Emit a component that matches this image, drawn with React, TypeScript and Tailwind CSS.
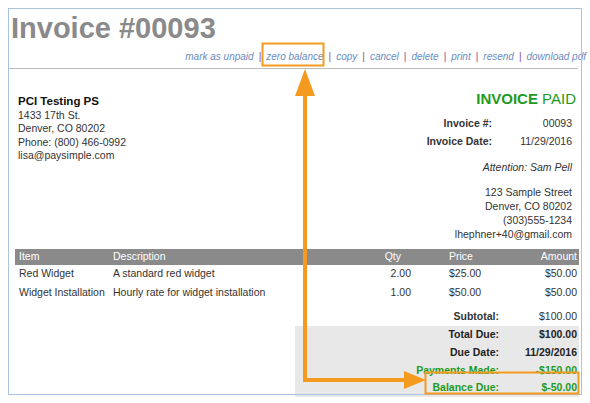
export default function App() {
  const links = ["mark as unpaid", "zero balance", "copy", "cancel", "delete", "print", "resend", "download pdf"];
  return (
    <div className="relative w-[590px] h-[403px] bg-white overflow-hidden" style={{ fontFamily: '"Liberation Sans", Arial, sans-serif' }}>
      <div className="absolute left-[8px] top-[8px] w-[574px] h-[387px] border border-[#a9c3de]" />
      <div className="pl-[10px] pt-[12px] w-[580px]">
        <div className="text-[29px] font-bold text-[#8a8a8a] leading-[32px] ml-[1px]">Invoice #00093</div>
        <div className="flex justify-end items-center text-[10px] italic text-[#6a8cbf] mt-[5px] whitespace-nowrap -mr-[6px] h-[14px]">
          {links.map((l, i) => (
            <span key={l} className="flex items-center">
              {i > 0 && <span className="mx-[5px] not-italic text-[#8a4b8f]">|</span>}
              <span>{l}</span>
            </span>
          ))}
        </div>
        <div className="h-[1px] bg-[#bbbbbb] mt-[5px] -ml-[2px] w-[570px]" />
        <div className="flex justify-between mt-[21px] pr-[4px]">
          <div className="text-[10.5px] text-[#333] leading-[13.5px] pl-[8px] pt-[5px]">
            <div className="font-bold text-[11.5px] text-[#111]">PCI Testing PS</div>
            <div>1433 17th St.</div>
            <div>Denver, CO 80202</div>
            <div>Phone: (800) 466-0992</div>
            <div>lisa@paysimple.com</div>
          </div>
          <div className="flex flex-col items-end text-[10.5px] text-[#333]">
            <div className="text-[15px] text-[#1e9a1e] leading-[18px]"><b>INVOICE</b> PAID</div>
            <div className="grid grid-cols-[auto_80px] auto-rows-[18px] items-center mt-[7px] mr-[4px]">
              <span className="font-bold text-right">Invoice #:</span><span className="text-right">00093</span>
              <span className="font-bold text-right">Invoice Date:</span><span className="text-right">11/29/2016</span>
            </div>
            <div className="italic mt-[9px] mr-[4px] leading-[14px]">Attention: Sam Pell</div>
            <div className="text-right leading-[14px] mt-[11px] mr-[4px]">
              <div>123 Sample Street</div>
              <div>Denver, CO 80202</div>
              <div>(303)555-1234</div>
              <div>lhephner+40@gmail.com</div>
            </div>
          </div>
        </div>
        <div className="mt-[8px] w-[564px] ml-[5px] text-[10.5px]">
          <div className="grid grid-cols-[94px_232px_66px_100px_1fr] bg-[#8a8a8a] text-white h-[16px] items-center pl-[4px]">
            <span>Item</span><span>Description</span><span className="text-right pr-[10px]">Qty</span><span className="pl-[38px]">Price</span><span className="text-right pr-[2px]">Amount</span>
          </div>
          {[["Red Widget", "A standard red widget", "2.00", "$25.00", "$50.00"], ["Widget Installation", "Hourly rate for widget installation", "1.00", "$50.00", "$50.00"]].map(r => (
            <div key={r[0]} className="grid grid-cols-[94px_232px_66px_100px_1fr] text-[#333] h-[18.5px] items-center pl-[4px]">
              <span>{r[0]}</span><span>{r[1]}</span><span className="text-right">{r[2]}</span><span className="pl-[38px]">{r[3]}</span><span className="text-right pr-[2px]">{r[4]}</span>
            </div>
          ))}
          <div className="grid grid-cols-[1fr_80px] mt-[6px] h-[18px] items-center pl-[290px] text-[#333]">
            <span className="font-bold text-right">Subtotal:</span><span className="text-right pr-[2px]">$100.00</span>
          </div>
          <div className="ml-[280px] bg-[#e8e8e8] pl-[10px] h-[71px] flex flex-col">
            {[["Total Due:", "$100.00", "text-[#222]"], ["Due Date:", "11/29/2016", "text-[#222]"], ["Payments Made:", "-$150.00", "text-[#1e9a1e]"], ["Balance Due:", "$-50.00", "text-[#1e9a1e]"]].map(r => (
              <div key={r[0]} className={`grid grid-cols-[1fr_80px] h-[18.3px] items-center font-bold ${r[2]}`}>
                <span className="text-right">{r[0]}</span><span className="text-right pr-[2px]">{r[1]}</span>
              </div>
            ))}
          </div>
        </div>
      </div>
      <svg className="absolute left-0 top-0" width="590" height="403">
        <rect x="262.5" y="43.5" width="61" height="22" fill="none" stroke="#f39a1f" strokeWidth="2" />
        <rect x="425.5" y="372.5" width="153" height="21" fill="none" stroke="#f39a1f" strokeWidth="2" />
        <polyline points="305,95 305,380 412,380" fill="none" stroke="#f39a1f" strokeWidth="4" />
        <polygon points="305,69 295,96 315,96" fill="#f39a1f" />
        <polygon points="426,380 404,371 404,389" fill="#f39a1f" />
      </svg>
    </div>
  );
}
